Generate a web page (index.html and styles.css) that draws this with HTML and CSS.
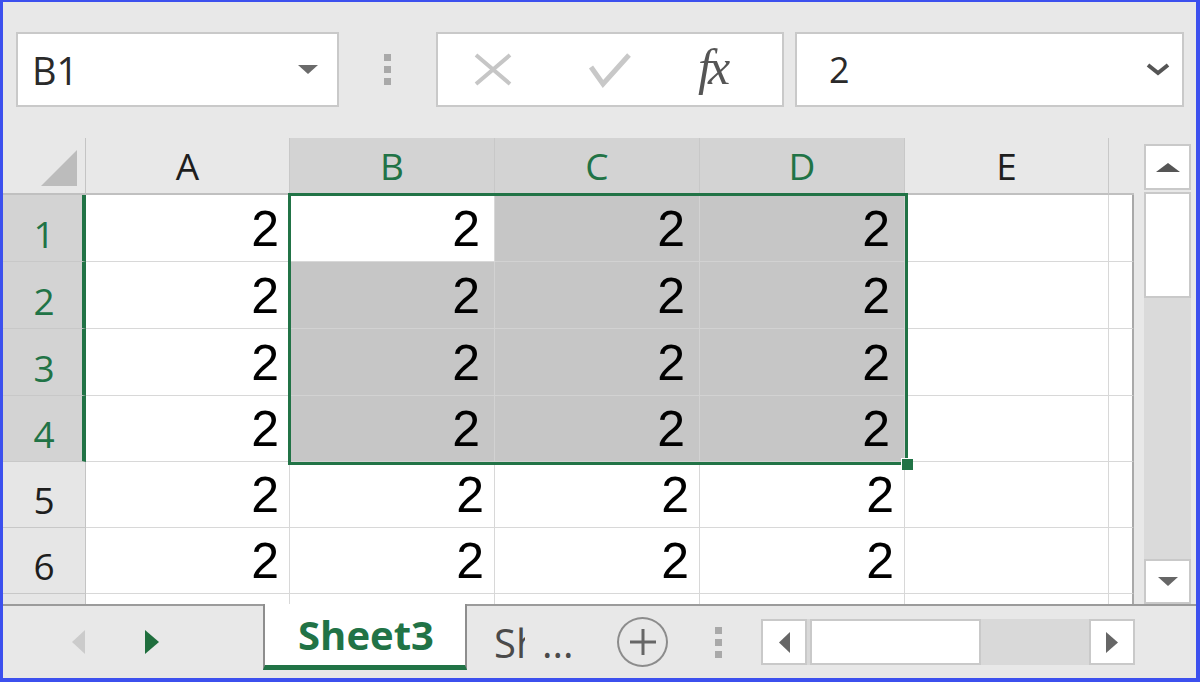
FILE: index.html
```html
<!DOCTYPE html>
<html>
<head>
<meta charset="utf-8">
<link rel="stylesheet" href="styles.css">
</head>
<body>
<div class="window">
  <div class="toolbar">
    <div class="namebox">
      <span class="nb-text">B1</span>
      <svg class="nb-arrow" width="20" height="9" viewBox="0 0 20 9"><path d="M0 0H20L10 9Z" fill="#6b6b6b"/></svg>
    </div>
    <div class="grip"><i></i><i></i><i></i></div>
    <div class="fxbox">
      <svg class="ic-x" width="40" height="35" viewBox="0 0 40 35"><path d="M3 3L37 32M37 3L3 32" stroke="#c6c6c6" stroke-width="4" fill="none"/></svg>
      <svg class="ic-ok" width="44" height="36" viewBox="0 0 44 36"><path d="M3 15L15 32L41 3" stroke="#c8c8c8" stroke-width="5" fill="none"/></svg>
      <span class="ic-fx">fx</span>
    </div>
    <div class="input">
      <span class="in-text">2</span>
      <svg class="in-chev" width="24" height="13" viewBox="0 0 24 13"><path d="M2 2L12 10L22 2" stroke="#555" stroke-width="4" fill="none"/></svg>
    </div>
  </div>

  <div class="main">
    <div class="sheet">
      <div class="corner"><svg width="36" height="36" viewBox="0 0 36 36"><path d="M36 0V36H0Z" fill="#bcbcbc"/></svg></div>
      <div class="ch">A</div>
      <div class="ch sel">B</div>
      <div class="ch sel">C</div>
      <div class="ch sel">D</div>
      <div class="ch">E</div>
      <div class="ch last"></div>

      <div class="rh sel">1</div>
      <div class="c">2</div>
      <div class="c in">2</div>
      <div class="c in sel">2</div>
      <div class="c in sel">2</div>
      <div class="c"></div>
      <div class="c edge"></div>

      <div class="rh sel">2</div>
      <div class="c">2</div>
      <div class="c in sel">2</div>
      <div class="c in sel">2</div>
      <div class="c in sel">2</div>
      <div class="c"></div>
      <div class="c edge"></div>

      <div class="rh sel">3</div>
      <div class="c">2</div>
      <div class="c in sel">2</div>
      <div class="c in sel">2</div>
      <div class="c in sel">2</div>
      <div class="c"></div>
      <div class="c edge"></div>

      <div class="rh sel">4</div>
      <div class="c">2</div>
      <div class="c in sel">2</div>
      <div class="c in sel">2</div>
      <div class="c in sel">2</div>
      <div class="c"></div>
      <div class="c edge"></div>

      <div class="rh">5</div>
      <div class="c">2</div>
      <div class="c">2</div>
      <div class="c">2</div>
      <div class="c">2</div>
      <div class="c"></div>
      <div class="c edge"></div>

      <div class="rh">6</div>
      <div class="c">2</div>
      <div class="c">2</div>
      <div class="c">2</div>
      <div class="c">2</div>
      <div class="c"></div>
      <div class="c edge"></div>

      <div class="rh part"></div>
      <div class="c part"></div>
      <div class="c part"></div>
      <div class="c part"></div>
      <div class="c part"></div>
      <div class="c part"></div>
      <div class="c part edge"></div>

      <div class="selection"><span class="handle"></span></div>
    </div>

    <div class="vscroll">
      <div class="sbtn up"><svg width="24" height="9" viewBox="0 0 24 9"><path d="M0 9H24L12 0Z" fill="#555"/></svg></div>
      <div class="vthumb"></div>
      <div class="vtrack"></div>
      <div class="sbtn down"><svg width="20" height="9" viewBox="0 0 20 9"><path d="M0 0H20L10 9Z" fill="#666"/></svg></div>
    </div>
  </div>

  <div class="tabbar">
    <div class="nav">
      <svg class="nav-l" width="13" height="24" viewBox="0 0 13 24"><path d="M13 0V24L0 12Z" fill="#cbcbcb"/></svg>
      <svg class="nav-r" width="14" height="24" viewBox="0 0 14 24"><path d="M0 0V24L14 12Z" fill="#1f6e3d"/></svg>
    </div>
    <div class="tab">Sheet3</div>
    <div class="more"><span class="clip">Sh</span><span class="dots">...</span></div>
    <div class="plus"><svg width="28" height="28" viewBox="0 0 28 28"><path d="M14 1V27M1 14H27" stroke="#666" stroke-width="3"/></svg></div>
    <div class="grip small"><i></i><i></i><i></i></div>
    <div class="hscroll">
      <div class="hbtn"><svg width="11" height="21" viewBox="0 0 11 21"><path d="M11 0V21L0 10.5Z" fill="#666"/></svg></div>
      <div class="hthumb"></div>
      <div class="htrack"></div>
      <div class="hbtn"><svg width="12" height="21" viewBox="0 0 12 21"><path d="M0 0V21L12 10.5Z" fill="#666"/></svg></div>
    </div>
  </div>
</div>
</body>
</html>
```

FILE: styles.css
```css
html, body {
  margin: 0;
  padding: 0;
  overflow: hidden;
}

.window {
  width: 1200px;
  height: 682px;
  box-sizing: border-box;
  border-style: solid;
  border-color: #3c50ee;
  border-width: 2px 4px 4px 3px;
  background: #e8e8e8;
  display: flex;
  flex-direction: column;
  font-family: "Open Sans", "Noto Sans", sans-serif;
  color: #1e1e1e;
}

/* ---------- toolbar ---------- */
.toolbar {
  height: 136px;
  flex: none;
  box-sizing: border-box;
  padding-top: 30px;
  display: flex;
  align-items: flex-start;
}

.namebox, .fxbox, .input {
  height: 75px;
  box-sizing: border-box;
  background: #fff;
  border: 2px solid #c9c9c9;
  display: flex;
  align-items: center;
}

.namebox {
  margin-left: 13px;
  width: 323px;
  padding-left: 14px;
  padding-right: 19px;
}

.nb-text {
  font-size: 38px;
  color: #2a2a2a;
  flex: 1;
}

.grip {
  width: 97px;
  height: 75px;
  display: flex;
  flex-direction: column;
  align-items: center;
  justify-content: center;
  gap: 5px;
}

.grip i {
  display: block;
  width: 7px;
  height: 7px;
  background: #a9a9a9;
}

.fxbox {
  width: 348px;
  padding-left: 35px;
}

.ic-ok {
  margin-left: 75px;
}

.ic-fx {
  margin-left: 66px;
  font-family: "Liberation Serif", "DejaVu Serif", serif;
  font-style: italic;
  font-size: 50px;
  letter-spacing: -4px;
  color: #555;
  line-height: 1;
  padding-bottom: 6px;
}

.input {
  margin-left: 11px;
  width: 389px;
  padding-left: 32px;
  padding-right: 12px;
}

.in-text {
  flex: 1;
  font-size: 36px;
  color: #2a2a2a;
}

/* ---------- main / sheet ---------- */
.main {
  height: 466px;
  flex: none;
  display: flex;
}

.sheet {
  position: relative;
  width: 1131px;
  display: grid;
  grid-template-columns: 83px 204px 205px 205px 205px 204px 25px;
  grid-template-rows: 57px 67px 67px 67px 66px 66px 66px 10px;
}

.sheet > div {
  box-sizing: border-box;
}

.corner {
  border-right: 1px solid #c4c4c4;
  border-bottom: 2px solid #c0c0c0;
  display: flex;
  justify-content: flex-end;
  align-items: flex-end;
  padding: 0 8px 7px 0;
}

.ch {
  border-right: 1px solid #c8c8c8;
  border-bottom: 2px solid #c0c0c0;
  display: flex;
  justify-content: center;
  align-items: flex-end;
  padding-bottom: 2px;
  font-size: 37px;
  line-height: normal;
  color: #1e1e1e;
}

.ch.sel {
  background: #d3d3d3;
  color: #217346;
}

.ch.last {
  border-right: none;
}

.rh {
  border-right: 1px solid #c4c4c4;
  border-bottom: 1px solid #c8c8c8;
  display: flex;
  justify-content: center;
  align-items: flex-end;
  padding-bottom: 2px;
  font-size: 37px;
  line-height: normal;
  color: #1e1e1e;
  background: #e6e6e6;
}

.rh.sel {
  background: #d3d3d3;
  color: #217346;
  border-right: 4px solid #217346;
  padding-left: 3px;
}

.c {
  background: #fff;
  border-right: 1px solid #d8d8d8;
  border-bottom: 1px solid #d8d8d8;
  display: flex;
  justify-content: flex-end;
  align-items: flex-end;
  padding: 0 10px 3px 0;
  font-family: "Liberation Sans", Arial, sans-serif;
  font-size: 50px;
  line-height: normal;
  color: #000;
}

.c.in {
  padding-right: 14px;
}

.c.sel {
  background: #c6c6c6;
  border-right-color: #d2d2d2;
  border-bottom-color: #d2d2d2;
}

.c.edge {
  border-right: 2px solid #a9a9a9;
}

.part {
  border-bottom: none !important;
}

.selection {
  position: absolute;
  left: 285px;
  top: 55px;
  width: 620px;
  height: 272px;
  box-sizing: border-box;
  border: 3px solid #217346;
  pointer-events: none;
}

.handle {
  position: absolute;
  right: -8px;
  bottom: -8px;
  width: 11px;
  height: 11px;
  background: #217346;
  border-left: 1px solid #fff;
  border-top: 1px solid #fff;
}

/* ---------- vertical scrollbar ---------- */
.vscroll {
  flex: 1;
  display: flex;
  flex-direction: column;
  padding: 6px 5px 0 10px;
}

.sbtn, .vthumb, .hbtn, .hthumb {
  box-sizing: border-box;
  background: #fff;
  border: 2px solid #c9c9c9;
  display: flex;
  align-items: center;
  justify-content: center;
}

.sbtn.up {
  height: 46px;
}

.vthumb {
  margin-top: 2px;
  height: 106px;
}

.vtrack {
  flex: 1;
  background: #dadada;
}

.sbtn.down {
  height: 45px;
}

/* ---------- tab bar ---------- */
.tabbar {
  flex: 1;
  border-top: 2px solid #9b9b9b;
  display: flex;
  align-items: center;
}

.nav {
  width: 260px;
  display: flex;
  align-items: center;
  padding-left: 69px;
  box-sizing: border-box;
}

.nav-r {
  margin-left: 60px;
}

.tab {
  align-self: flex-start;
  margin-top: -2px;
  width: 204px;
  height: 66px;
  box-sizing: border-box;
  background: #fff;
  border-left: 2px solid #8e8e8e;
  border-right: 2px solid #8e8e8e;
  border-bottom: 5px solid #217346;
  display: flex;
  align-items: center;
  justify-content: center;
  padding-left: 2px;
  font-size: 40px;
  font-weight: 700;
  color: #217346;
}

.more {
  width: 120px;
  padding-left: 27px;
  box-sizing: border-box;
  font-size: 40px;
  color: #4a4a4a;
  white-space: nowrap;
  display: flex;
  align-items: baseline;
}

.clip {
  display: inline-block;
  width: 31px;
  overflow: hidden;
}

.dots {
  margin-left: 17px;
}

.plus {
  margin-left: 30px;
  width: 51px;
  height: 50px;
  box-sizing: border-box;
  border: 2px solid #8c8c8c;
  border-radius: 50%;
  display: flex;
  align-items: center;
  justify-content: center;
}

.grip.small {
  width: auto;
  height: 40px;
  margin-left: 47px;
}

.hscroll {
  margin-left: 39px;
  width: 374px;
  height: 46px;
  display: flex;
  background: #d9d9d9;
}

.hbtn {
  width: 46px;
  height: 46px;
}

.hthumb {
  margin-left: 3px;
  width: 171px;
}

.htrack {
  flex: 1;
}
```
